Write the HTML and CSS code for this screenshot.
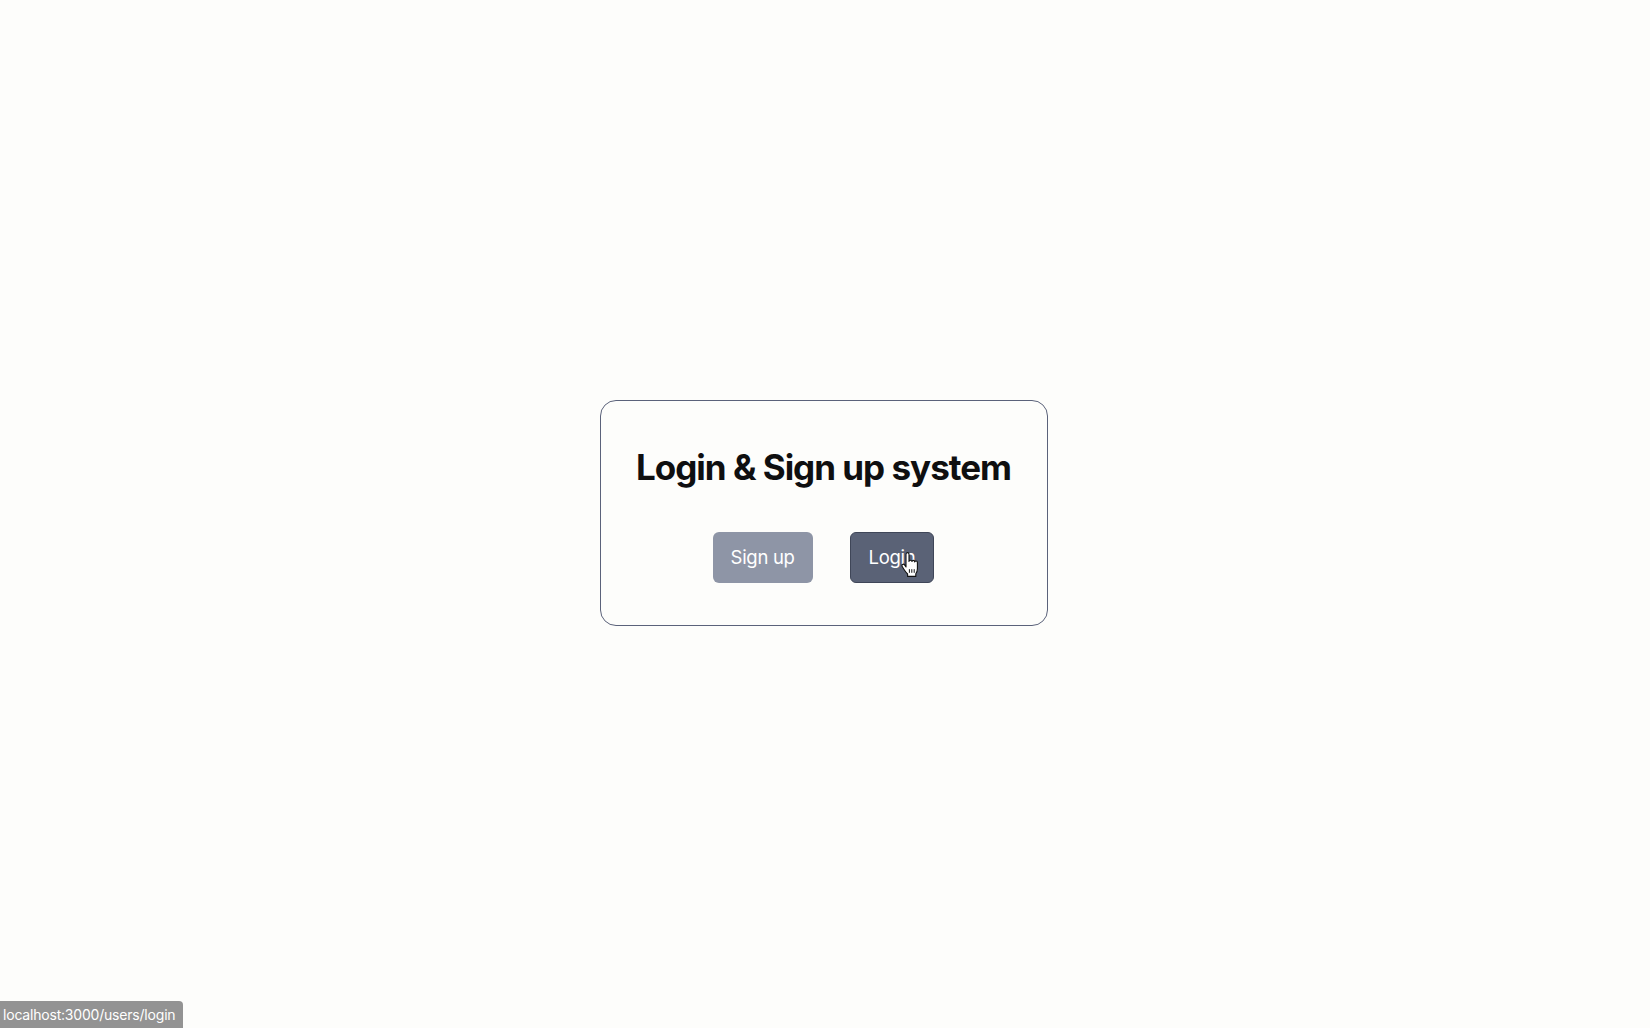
FILE: index.html
```
<!DOCTYPE html>
<html lang="en">
<head>
<meta charset="utf-8">
<title>Login &amp; Sign up system</title>
<link rel="stylesheet" href="styles.css">
</head>
<body>
<main class="page">
  <section class="card">
    <h1 class="title">Login &amp; Sign up system</h1>
    <div class="actions">
      <a class="btn btn-light" href="#">Sign up</a>
      <a class="btn btn-dark" href="#">Login
        <svg class="cursor" width="18" height="26" viewBox="0 0 18 26" aria-hidden="true">
          <path d="M5 2.2c0-1 .7-1.6 1.5-1.6S8 1.2 8 2.2v7.2c.2-.8.8-1.2 1.5-1.2s1.3.5 1.4 1.3c.2-.7.8-1.1 1.4-1.1.8 0 1.4.6 1.4 1.5.2-.6.7-.9 1.300-.9.8 0 1.4.6 1.4 1.6v6.2c0 2.2-.6 3.6-1.6 5v2.6H6.6v-2.4c-1-1-2.3-2.6-3.4-4.3L1.2 14.5c-.5-.8-.3-1.7.4-2.1.7-.4 1.5-.2 2 .5L5 15V2.2z" fill="#fff" stroke="#111" stroke-width="1.1" stroke-linejoin="round"/>
          <path d="M8.4 17.2v3.6M10.8 17.2v3.6M13.2 17.2v3.6" stroke="#111" stroke-width="1" />
        </svg>
      </a>
    </div>
  </section>
</main>
<div class="status">localhost:3000/users/login</div>
</body>
</html>
```
FILE: styles.css
```
html, body {
  margin: 0;
  height: 100%;
}

body {
  background: #fdfdfb;
  font-family: Inter, "Liberation Sans", sans-serif;
  color: #111;
}

.page {
  height: 100%;
  display: flex;
  align-items: center;
  justify-content: center;
}

.card {
  box-sizing: border-box;
  width: 448px;
  height: 226px;
  border: 1px solid #5b627a;
  border-radius: 16px;
  padding: 46px 0 0;
  display: flex;
  flex-direction: column;
  align-items: center;
  margin-left: -3px;
  margin-top: -2px;
}

.title {
  margin: 0;
  font-size: 35px;
  line-height: 40px;
  font-weight: 700;
  letter-spacing: -1px;
  color: #0f0f10;
}

.actions {
  margin-top: 45px;
  display: flex;
  gap: 37px;
}

.btn {
  position: relative;
  display: block;
  box-sizing: border-box;
  height: 51px;
  padding: 0 18px;
  border-radius: 6px;
  font-size: 18.5px;
  line-height: 51px;
  letter-spacing: -0.3px;
  color: #fff;
  text-decoration: none;
}

.btn-light {
  background: #8e95a6;
}

.btn-dark {
  background: #5a6276;
  border: 1px solid #3f4658;
  line-height: 49px;
}

.cursor {
  position: absolute;
  left: 50px;
  top: 19px;
}

.status {
  position: fixed;
  left: 0;
  bottom: 0;
  height: 27px;
  padding: 0 8px 0 3px;
  background: #939393;
  color: #fff;
  font-size: 14px;
  line-height: 27px;
  letter-spacing: -0.2px;
  border-top-right-radius: 4px;
}
```
